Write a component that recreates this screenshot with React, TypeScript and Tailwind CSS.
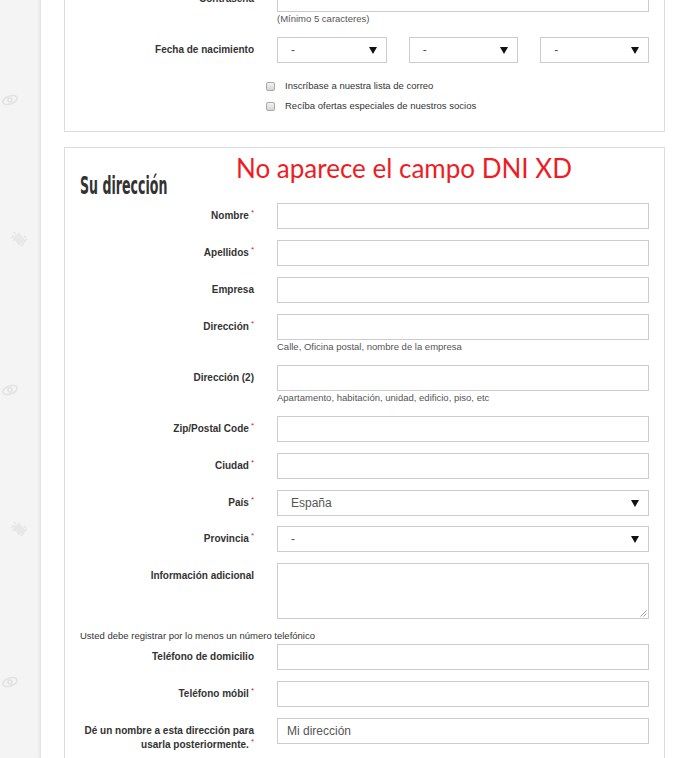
import type { ReactNode } from 'react';

const Req = () => <sup className="ml-[2px] text-[8px] text-[#c9302c] font-normal">*</sup>;

function Arrow() {
  return (
    <svg width="8" height="7" viewBox="0 0 8 7" className="shrink-0">
      <polygon points="0,0 8,0 4,7" fill="#111" />
    </svg>
  );
}

function Select({ value, className }: { value: string; className?: string }) {
  return (
    <div
      className={`flex h-[26px] items-center justify-between border border-[#ccc] bg-white pl-[13px] pr-[9px] text-[12px] text-[#555] ${className ?? ''}`}
    >
      <span>{value}</span>
      <Arrow />
    </div>
  );
}

function Input({ value }: { value?: string }) {
  return (
    <div className="flex h-[26px] items-center border border-[#ccc] bg-white px-[9px] text-[12px] text-[#555]">
      {value}
    </div>
  );
}

function Row({
  label,
  req,
  hint,
  children,
  className,
}: {
  label: ReactNode;
  req?: boolean;
  hint?: string;
  children: ReactNode;
  className?: string;
}) {
  return (
    <div className={`flex items-start ${className ?? 'mb-[11px]'}`}>
      <label className="w-[174px] shrink-0 pt-[6px] text-right text-[10px] font-bold leading-[14px] text-[#333]">
        {label}
        {req && <Req />}
      </label>
      <div className="ml-[23px] w-[372px]">
        {children}
        {hint && <p className="h-[14px] text-[9.5px] leading-[14px] text-[#555]">{hint}</p>}
      </div>
    </div>
  );
}

function Checkbox({ text }: { text: string }) {
  return (
    <div className="flex h-[20px] items-center">
      <span className="h-[9px] w-[9px] rounded-[2px] border border-[#a9a9a9] bg-gradient-to-b from-[#f2f2f2] to-[#d6d6d6]" />
      <span className="ml-[10px] text-[9.5px] text-[#333]">{text}</span>
    </div>
  );
}

function Eye() {
  return (
    <svg width="18" height="12" viewBox="0 0 18 12" fill="none" stroke="#e2e2e2" strokeWidth="1.6">
      <ellipse cx="9" cy="6" rx="7.5" ry="4" transform="rotate(-20 9 6)" />
      <circle cx="9" cy="6" r="2" />
    </svg>
  );
}

function Chip() {
  return (
    <svg width="20" height="18" viewBox="0 0 20 18" stroke="#e4e4e4" strokeWidth="1.2">
      <rect x="6" y="4" width="8" height="10" transform="rotate(-40 10 9)" fill="#e8e8e8" stroke="none" />
      <path d="M2 8l3-3M4 11l3-3M12 16l3-3M14 13l4-4M5 2l2 2M15 6l2 2" />
    </svg>
  );
}

export default function App() {
  return (
    <div className="flex h-[758px] overflow-hidden bg-white font-['Liberation_Sans',Arial,sans-serif]">
      <aside className="flex w-[41px] shrink-0 flex-col items-start border-r border-[#e4e4e4] bg-[#f4f4f4] pl-[1px] shadow-[inset_-3px_0_3px_-2px_rgba(0,0,0,0.06)]">
        <div className="mt-[94px]"><Eye /></div>
        <div className="ml-[8px] mt-[124px]"><Chip /></div>
        <div className="mt-[136px]"><Eye /></div>
        <div className="ml-[8px] mt-[124px]"><Chip /></div>
        <div className="mt-[138px]"><Eye /></div>
      </aside>

      <main className="ml-[23px] w-[601px] shrink-0">
        <section className="-mt-[40px] border border-[#dcdcdc] px-[15px] pb-[15px] pt-[25px]">
          <Row label="Contraseña" className="mb-0">
            <Input />
            <p className="h-[13px] text-[9.5px] leading-[13px] text-[#555]">(Mínimo 5 caracteres)</p>
          </Row>
          <Row label="Fecha de nacimiento" className="mb-[13px] mt-[12px]">
            <div className="flex gap-[22px]">
              <Select value="-" className="w-[110px]" />
              <Select value="-" className="w-[110px]" />
              <Select value="-" className="w-[109px]" />
            </div>
          </Row>
          <div className="pl-[186px]">
            <Checkbox text="Inscríbase a nuestra lista de correo" />
            <Checkbox text="Recíba ofertas especiales de nuestros socios" />
          </div>
        </section>

        <section className="relative mt-[15px] border border-[#dcdcdc] px-[15px] pt-[24px]">
          <p className="absolute left-[171px] top-[3px] font-['Lato',sans-serif] text-[26px] leading-[34px] text-[#ee1c25]">
            No aparece el campo DNI XD
          </p>
          <h2 className="mb-[4px] h-[27px] origin-left scale-x-[0.56] font-['Liberation_Sans_Narrow','DejaVu_Sans_Condensed',sans-serif] text-[25px] font-bold leading-[27px] text-[#333]">
            Su dirección
          </h2>
          <Row label="Nombre" req><Input /></Row>
          <Row label="Apellidos" req><Input /></Row>
          <Row label="Empresa"><Input /></Row>
          <Row label="Dirección" req hint="Calle, Oficina postal, nombre de la empresa"><Input /></Row>
          <Row label="Dirección (2)" hint="Apartamento, habitación, unidad, edificio, piso, etc"><Input /></Row>
          <Row label="Zip/Postal Code" req><Input /></Row>
          <Row label="Ciudad" req><Input /></Row>
          <Row label="País" req className="mb-[10px]"><Select value="España" /></Row>
          <Row label="Provincia" req><Select value="-" /></Row>
          <Row label="Información adicional" className="mb-0">
            <div className="relative h-[56px] border border-[#ccc] bg-white">
              <svg width="7" height="7" viewBox="0 0 7 7" className="absolute bottom-[1px] right-[1px]" stroke="#888" strokeWidth="0.8">
                <path d="M6.5 0.5L0.5 6.5M6.5 3.5L3.5 6.5" />
              </svg>
            </div>
          </Row>
          <p className="mb-[2px] mt-[11px] h-[12px] text-[9.5px] leading-[12px] text-[#333]">
            Usted debe registrar por lo menos un número telefónico
          </p>
          <Row label="Teléfono de domicilio"><Input /></Row>
          <Row label="Teléfono móbil" req><Input /></Row>
          <Row label={<>Dé un nombre a esta dirección para usarla posteriormente.</>} req>
            <Input value="Mi dirección" />
          </Row>
        </section>
      </main>
    </div>
  );
}
